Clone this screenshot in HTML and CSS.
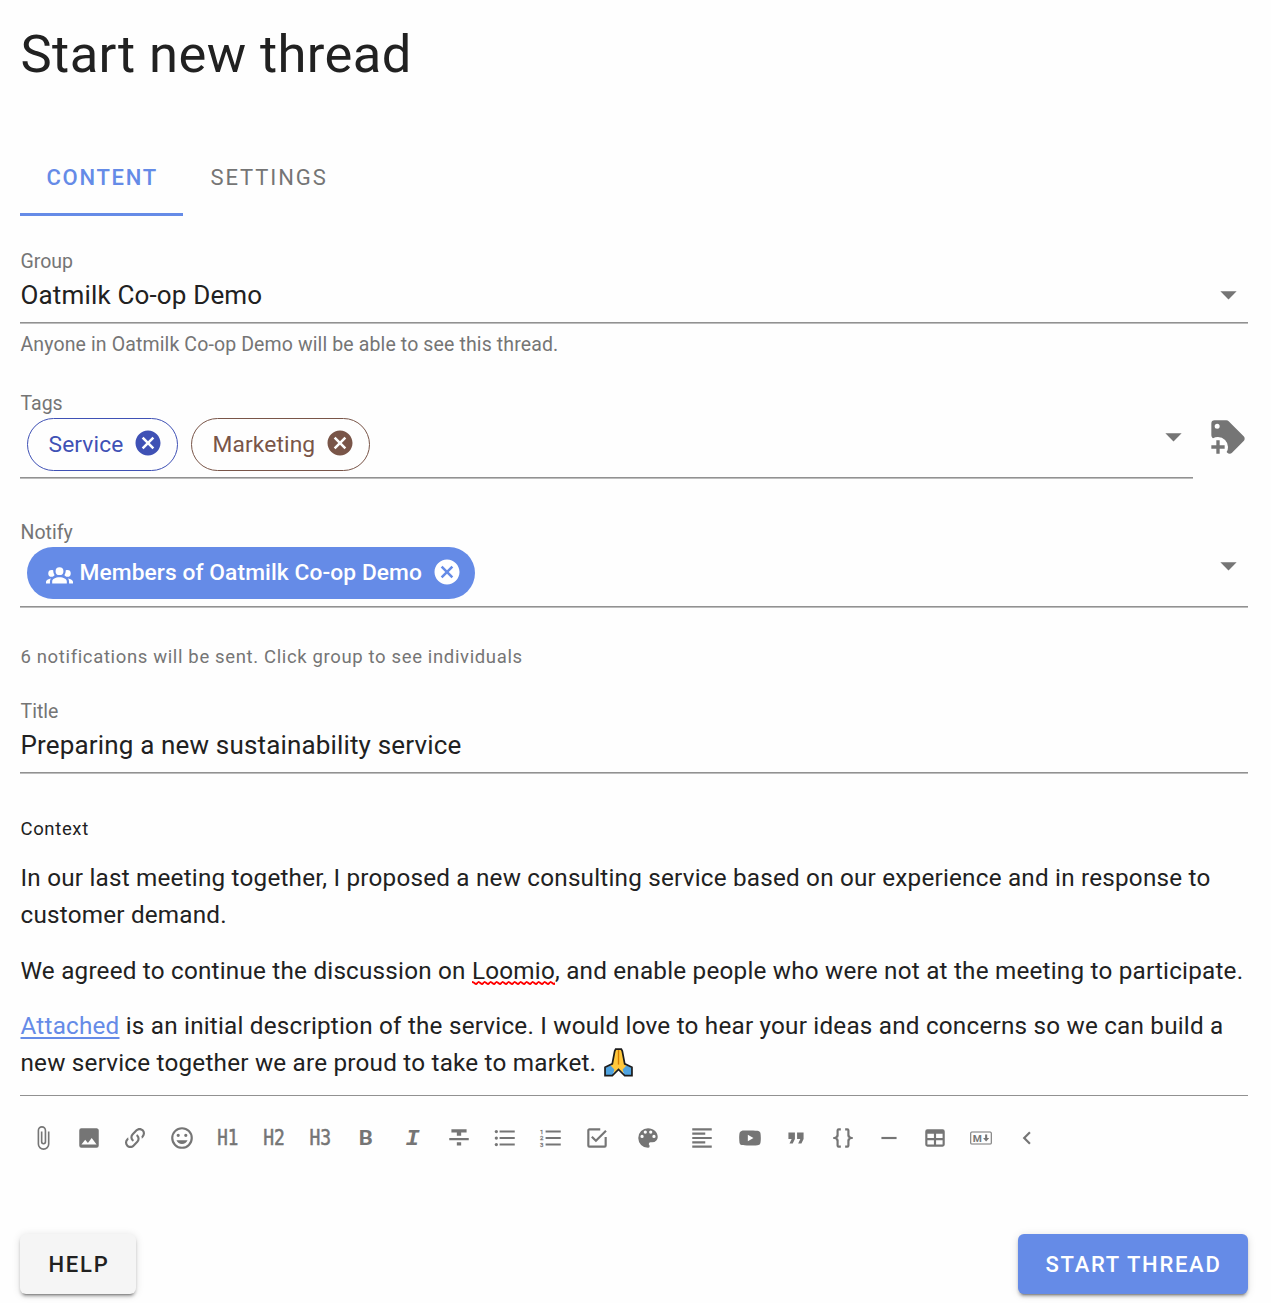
FILE: index.html
```
<!DOCTYPE html>
<html lang="en">
<head>
<meta charset="utf-8">
<title>Start new thread</title>
<link rel="stylesheet" href="styles.css">
</head>
<body>
<svg class="defs" aria-hidden="true">
  <symbol id="cancel" viewBox="0 0 24 24"><path d="M12,2C17.53,2 22,6.47 22,12C22,17.53 17.53,22 12,22C6.47,22 2,17.53 2,12C2,6.47 6.47,2 12,2M15.59,7L12,10.59L8.41,7L7,8.41L10.59,12L7,15.59L8.41,17L12,13.41L15.59,17L17,15.59L13.41,12L17,8.41L15.59,7Z"/></symbol>
  <symbol id="caret" viewBox="0 0 24 24"><path d="M7,10L12,15L17,10H7Z"/></symbol>
</svg>
<main class="form">
  <h1 class="headline">Start new thread</h1>

  <nav class="tabs">
    <a class="tab tab-active">CONTENT</a>
    <a class="tab">SETTINGS</a>
  </nav>

  <section class="field group-field">
    <label class="label">Group</label>
    <div class="control">
      <span class="value">Oatmilk Co-op Demo</span>
      <svg class="caret"><use href="#caret"/></svg>
    </div>
  </section>
  <p class="hint">Anyone in Oatmilk Co-op Demo will be able to see this thread.</p>

  <div class="tags-row">
    <section class="field tags-field">
      <label class="label">Tags</label>
      <div class="control chips">
        <span class="chip chip-service">Service<svg class="chip-close"><use href="#cancel"/></svg></span>
        <span class="chip chip-marketing">Marketing<svg class="chip-close"><use href="#cancel"/></svg></span>
        <svg class="caret"><use href="#caret"/></svg>
      </div>
    </section>
    <svg class="tag-plus" viewBox="0 0 24 24"><path d="M21.41 11.58L12.41 2.58A2 2 0 0 0 11 2H4A2 2 0 0 0 2 4V11A2 2 0 0 0 2.59 12.42L3 12.82A5.62 5.62 0 0 1 6 12A6 6 0 0 1 12 18A5.62 5.62 0 0 1 11.18 21L11.58 21.4A2 2 0 0 0 13 22A2 2 0 0 0 14.41 21.41L21.41 14.41A2 2 0 0 0 22 13A2 2 0 0 0 21.41 11.58M5.5 7A1.5 1.5 0 1 1 7 5.5A1.5 1.5 0 0 1 5.5 7M10 19H7V22H5V19H2V17H5V14H7V17H10Z"/></svg>
  </div>

  <section class="field notify-field">
    <label class="label">Notify</label>
    <div class="control chips">
      <span class="chip chip-members"><svg class="members-icon" viewBox="0 0 24 24"><path d="M12,5.5A3.5,3.5 0 0,1 15.5,9A3.5,3.5 0 0,1 12,12.5A3.5,3.5 0 0,1 8.5,9A3.5,3.5 0 0,1 12,5.5M5,8C5.56,8 6.08,8.15 6.53,8.42C6.38,9.85 6.8,11.27 7.66,12.38C7.16,13.34 6.16,14 5,14A3,3 0 0,1 2,11A3,3 0 0,1 5,8M19,8A3,3 0 0,1 22,11A3,3 0 0,1 19,14C17.84,14 16.84,13.34 16.34,12.38C17.2,11.27 17.62,9.85 17.47,8.42C17.92,8.15 18.44,8 19,8M5.5,18.25C5.5,16.18 8.41,14.5 12,14.5C15.59,14.5 18.5,16.18 18.5,18.25V20H5.5V18.25M0,20V18.5C0,17.11 1.89,15.94 4.45,15.6C3.86,16.28 3.5,17.22 3.5,18.25V20H0M24,20H20.5V18.25C20.5,17.22 20.14,16.28 19.55,15.6C22.11,15.94 24,17.11 24,18.5V20Z"/></svg>Members of Oatmilk Co-op Demo<svg class="chip-close"><use href="#cancel"/></svg></span>
      <svg class="caret"><use href="#caret"/></svg>
    </div>
  </section>
  <p class="caption notify-count">6 notifications will be sent. Click group to see individuals</p>

  <section class="field title-field">
    <label class="label">Title</label>
    <div class="control"><span class="value">Preparing a new sustainability service</span></div>
  </section>

  <p class="caption context-label">Context</p>
  <article class="editor">
    <p>In our last meeting together, I proposed a new consulting service based on our experience and in response to customer demand.</p>
    <p>We agreed to continue the discussion on <span class="misspelt">Loomio</span>, and enable people who were not at the meeting to participate.</p>
    <p><a class="link">Attached</a> is an initial description of the service. I would love to hear your ideas and concerns so we can build a new service together we are proud to take to market. <svg class="emoji" viewBox="0 0 84 84" role="img" aria-label="Folded hands"><path class="hands" d="M34 3H50L53 9L60 44L66 54L56 72L42 61L28 72L18 54L24 44L31 9Z"/><path class="cuff" d="M3 57L19 51L30 62L25 80H3Z"/><path class="cuff" d="M81 57L65 51L54 62L59 80H81Z"/><path class="crease" d="M42 6V48"/><path class="outline" d="M34 3H50L53 9L60 46L81 56V80H60L42 62L24 80H3V56L24 46L31 9Z"/></svg></p>
  </article>

  <div class="toolbar">
    <span class="tool"><svg viewBox="0 0 24 24"><path d="M16.5,6V17.5A4,4 0 0,1 12.5,21.5A4,4 0 0,1 8.5,17.5V5A2.5,2.5 0 0,1 11,2.5A2.5,2.5 0 0,1 13.5,5V15.5A1,1 0 0,1 12.5,16.5A1,1 0 0,1 11.5,15.5V6H10V15.5A2.5,2.5 0 0,0 12.5,18A2.5,2.5 0 0,0 15,15.5V5A4,4 0 0,0 11,1A4,4 0 0,0 7,5V17.5A5.5,5.5 0 0,0 12.5,23A5.5,5.5 0 0,0 18,17.5V6H16.5Z"/></svg></span>
    <span class="tool"><svg viewBox="0 0 24 24"><path d="M8.5,13.5L11,16.5L14.5,12L19,18H5M21,19V5C21,3.89 20.1,3 19,3H5A2,2 0 0,0 3,5V19A2,2 0 0,0 5,21H19A2,2 0 0,0 21,19Z"/></svg></span>
    <span class="tool"><svg viewBox="0 0 24 24"><path d="M10.59,13.41C11,13.8 11,14.44 10.59,14.83C10.2,15.22 9.56,15.22 9.17,14.83C7.22,12.88 7.22,9.71 9.17,7.76V7.76L12.71,4.22C14.66,2.27 17.83,2.27 19.78,4.22C21.73,6.17 21.73,9.34 19.78,11.29L18.29,12.78C18.3,11.96 18.17,11.14 17.89,10.36L18.36,9.88C19.54,8.71 19.54,6.81 18.36,5.64C17.19,4.46 15.29,4.46 14.12,5.64L10.59,9.17C9.41,10.34 9.41,12.24 10.59,13.41M13.41,9.17C13.8,8.78 14.44,8.78 14.83,9.17C16.78,11.12 16.78,14.29 14.83,16.24V16.24L11.29,19.78C9.34,21.73 6.17,21.73 4.22,19.78C2.27,17.83 2.27,14.66 4.22,12.71L5.71,11.22C5.7,12.04 5.83,12.86 6.11,13.65L5.64,14.12C4.46,15.29 4.46,17.19 5.64,18.36C6.81,19.54 8.71,19.54 9.88,18.36L13.41,14.83C14.59,13.66 14.59,11.76 13.41,10.59C13,10.2 13,9.56 13.41,9.17Z"/></svg></span>
    <span class="tool"><svg viewBox="0 0 24 24"><path d="M12,17.5C14.33,17.5 16.3,16.04 17.11,14H6.89C7.69,16.04 9.67,17.5 12,17.5M8.5,11A1.5,1.5 0 0,0 10,9.5A1.5,1.5 0 0,0 8.5,8A1.5,1.5 0 0,0 7,9.5A1.5,1.5 0 0,0 8.5,11M15.5,11A1.5,1.5 0 0,0 17,9.5A1.5,1.5 0 0,0 15.5,8A1.5,1.5 0 0,0 14,9.5A1.5,1.5 0 0,0 15.5,11M12,20A8,8 0 0,1 4,12A8,8 0 0,1 12,4A8,8 0 0,1 20,12A8,8 0 0,1 12,20M12,2C6.47,2 2,6.5 2,12A10,10 0 0,0 12,22A10,10 0 0,0 22,12A10,10 0 0,0 12,2Z"/></svg></span>
    <span class="tool"><svg viewBox="0 0 24 24"><text class="heading-glyph" x="2" y="18.2" textLength="19.5" lengthAdjust="spacingAndGlyphs">H1</text></svg></span>
    <span class="tool"><svg viewBox="0 0 24 24"><text class="heading-glyph" x="2" y="18.2" textLength="20" lengthAdjust="spacingAndGlyphs">H2</text></svg></span>
    <span class="tool"><svg viewBox="0 0 24 24"><text class="heading-glyph" x="2.3" y="18.2" textLength="20" lengthAdjust="spacingAndGlyphs">H3</text></svg></span>
    <span class="tool"><svg viewBox="0 0 24 24"><text class="bold-glyph" x="5.3" y="18.2" textLength="13" lengthAdjust="spacingAndGlyphs">B</text></svg></span>
    <span class="tool"><svg viewBox="0 0 24 24"><text class="italic-glyph" x="5" y="18.2" textLength="13" lengthAdjust="spacingAndGlyphs">I</text></svg></span>
    <span class="tool"><svg viewBox="0 0 24 24"><path d="M3,14H21V12H3M5,4V7H10V10H14V7H19V4M10,19H14V16H10V19Z"/></svg></span>
    <span class="tool"><svg viewBox="0 0 24 24"><path d="M7,5H21V7H7V5M7,13V11H21V13H7M7,19V17H21V19H7"/><circle cx="4" cy="6" r="1.5"/><circle cx="4" cy="12" r="1.5"/><circle cx="4" cy="18" r="1.5"/></svg></span>
    <span class="tool"><svg viewBox="0 0 24 24"><path d="M7,5H21V7H7V5M7,13V11H21V13H7M7,19V17H21V19H7"/><text class="list-digit" x="1.8" y="7.9">1</text><text class="list-digit" x="1.8" y="14">2</text><text class="list-digit" x="1.8" y="20.2">3</text></svg></span>
    <span class="tool"><svg viewBox="0 0 24 24"><path d="M19,19H5V5H15V3H5C3.89,3 3,3.89 3,5V19A2,2 0 0,0 5,21H19A2,2 0 0,0 21,19V11H19M7.91,10.08L6.5,11.5L11,16L21,6L19.59,4.58L11,13.17L7.91,10.08Z"/></svg></span>
    <span class="tool tool-colour"><svg viewBox="0 0 24 24"><path d="M17.5,12A1.5,1.5 0 0,1 16,10.5A1.5,1.5 0 0,1 17.5,9A1.5,1.5 0 0,1 19,10.5A1.5,1.5 0 0,1 17.5,12M14.5,8A1.5,1.5 0 0,1 13,6.5A1.5,1.5 0 0,1 14.5,5A1.5,1.5 0 0,1 16,6.5A1.5,1.5 0 0,1 14.5,8M9.5,8A1.5,1.5 0 0,1 8,6.5A1.5,1.5 0 0,1 9.5,5A1.5,1.5 0 0,1 11,6.5A1.5,1.5 0 0,1 9.5,8M6.5,12A1.5,1.5 0 0,1 5,10.5A1.5,1.5 0 0,1 6.5,9A1.5,1.5 0 0,1 8,10.5A1.5,1.5 0 0,1 6.5,12M12,3A9,9 0 0,0 3,12A9,9 0 0,0 12,21A1.5,1.5 0 0,0 13.5,19.5C13.5,19.11 13.35,18.76 13.11,18.5C12.88,18.23 12.73,17.88 12.73,17.5A1.5,1.5 0 0,1 14.23,16H16A5,5 0 0,0 21,11C21,6.58 16.97,3 12,3Z"/></svg></span>
    <span class="tool tool-align"><svg viewBox="0 0 24 24"><path d="M3,3H21V5H3V3M3,7H15V9H3V7M3,11H21V13H3V11M3,15H15V17H3V15M3,19H21V21H3V19Z"/></svg></span>
    <span class="tool"><svg viewBox="0 0 24 24"><path d="M10,15L15.19,12L10,9V15M21.56,7.17C21.69,7.64 21.78,8.27 21.84,9.07C21.91,9.87 21.94,10.56 21.94,11.16L22,12C22,14.19 21.84,15.8 21.56,16.83C21.31,17.73 20.73,18.31 19.83,18.56C19.36,18.69 18.5,18.78 17.18,18.84C15.88,18.91 14.69,18.94 13.59,18.94L12,19C7.81,19 5.2,18.84 4.17,18.56C3.27,18.31 2.69,17.73 2.44,16.83C2.31,16.36 2.22,15.73 2.16,14.93C2.09,14.13 2.06,13.44 2.06,12.84L2,12C2,9.81 2.16,8.2 2.44,7.17C2.69,6.27 3.27,5.69 4.17,5.44C4.64,5.31 5.5,5.22 6.82,5.16C8.12,5.09 9.31,5.06 10.41,5.06L12,5C16.19,5 18.8,5.16 19.83,5.44C20.73,5.69 21.31,6.27 21.56,7.17Z"/></svg></span>
    <span class="tool"><svg viewBox="0 0 24 24"><path d="M14,17H17L19,13V7H13V13H16M6,17H9L11,13V7H5V13H8L6,17Z"/></svg></span>
    <span class="tool"><svg viewBox="0 0 24 24"><path d="M8,3A2,2 0 0,0 6,5V9A2,2 0 0,1 4,11H3V13H4A2,2 0 0,1 6,15V19A2,2 0 0,0 8,21H10V19H8V14A2,2 0 0,0 6,12A2,2 0 0,0 8,10V5H10V3M16,3A2,2 0 0,1 18,5V9A2,2 0 0,0 20,11H21V13H20A2,2 0 0,0 18,15V19A2,2 0 0,1 16,21H14V19H16V14A2,2 0 0,1 18,12A2,2 0 0,1 16,10V5H14V3H16Z"/></svg></span>
    <span class="tool"><svg viewBox="0 0 24 24"><path d="M19,13H5V11H19V13Z"/></svg></span>
    <span class="tool"><svg viewBox="0 0 24 24"><path d="M5,4H19A2,2 0 0,1 21,6V18A2,2 0 0,1 19,20H5A2,2 0 0,1 3,18V6A2,2 0 0,1 5,4M5,8V12H11V8H5M13,8V12H19V8H13M5,14V18H11V14H5M13,14V18H19V14H13Z"/></svg></span>
    <span class="tool"><svg viewBox="0 0 24 24"><rect class="frame" x="2.5" y="6.5" width="19" height="11" rx="1"/><text class="md-glyph" x="4.4" y="15.3" textLength="8.4" lengthAdjust="spacingAndGlyphs">M</text><path d="M16.73 15.28L13.88 12.03H15.79V8.72H17.7V12.03H19.61Z"/></svg></span>
    <span class="tool"><svg viewBox="0 0 24 24"><path d="M15.41,16.58L10.83,12L15.41,7.41L14,6L8,12L14,18L15.41,16.58Z"/></svg></span>
  </div>

  <footer class="actions">
    <button class="btn btn-help">HELP</button>
    <button class="btn btn-primary">START THREAD</button>
  </footer>
</main>
</body>
</html>
```

FILE: styles.css
```
* { box-sizing: border-box; }

body {
  margin: 0;
  background: #fefefe;
  color: #212121;
  font-family: Roboto, "Liberation Sans", sans-serif;
}

p, h1 { margin: 0; }

svg { display: block; fill: currentColor; flex: none; }

.defs { display: none; }

.form {
  display: flex;
  flex-direction: column;
  min-height: 1303px;
  padding: 16px 23px 9px 20px;
}

.headline {
  padding-left: 0.5px;
  font-size: 52.5px;
  font-weight: 400;
  line-height: 76px;
  letter-spacing: 0.4px;
}

/* Tabs */
.tabs { display: flex; height: 78px; margin-top: 46px; }

.tab {
  display: flex;
  align-items: center;
  padding: 0 25px 0 26.5px;
  color: #757575;
  font-size: 22px;
  font-weight: 500;
  letter-spacing: 1.7px;
}

.tab:not(.tab-active) { font-weight: 400; padding-left: 27.5px; letter-spacing: 1.9px; }

.tab-active {
  width: 163px;
  color: #658be7;
  box-shadow: inset 0 -3px #658be7;
}

/* Fields */
.field {
  border-bottom: 1px solid #919191;
  box-shadow: 0 1px #bdbdbd;
}

.label {
  display: block;
  padding: 1px 0 0 0.5px;
  color: #757575;
  font-size: 19.5px;
  line-height: 26px;
}

.control {
  display: flex;
  align-items: center;
  justify-content: space-between;
  height: 47px;
  padding-bottom: 7px;
}

.value { padding-left: 0.5px; font-size: 26px; line-height: 40px; letter-spacing: 0.16px; }

.caret { width: 39px; height: 39px; margin-top: -1px; color: #757575; }

.group-field { margin-top: 32px; }

.hint {
  margin-top: 9px;
  padding-left: 0.5px;
  color: #757575;
  font-size: 19.5px;
  line-height: 26px;
  letter-spacing: 0.12px;
}

.tags-row { display: flex; justify-content: space-between; margin-top: 32px; }
.tags-field { width: 1173px; }
.tag-plus { width: 40px; height: 40px; margin-top: 27px; color: #757575; }

.chips {
  height: 60px;
  align-items: flex-start;
  justify-content: flex-start;
  gap: 13px;
  padding: 1px 0 0 7px;
}
.chips .caret { margin-left: auto; }

.chip {
  display: flex;
  align-items: center;
  height: 53px;
  border: 1.6px solid currentColor;
  border-radius: 27px;
  font-size: 22.75px;
  letter-spacing: 0.12px;
}

.chip-close { width: 30px; height: 30px; margin: -4px 0 0 auto; }

.chip-service { width: 151px; padding: 0 14px 0 20.5px; color: #3f51b5; }
.chip-marketing { width: 179px; padding: 0 14px 0 20.5px; color: #795548; }

.chip-members {
  width: 448px;
  height: 52px;
  padding: 0 13px 2px 19px;
  border: 0;
  background: #658be7;
  color: #fff;
  font-weight: 500;
  letter-spacing: 0.09px;
}
.chip-members .chip-close { margin-top: -1px; }
.members-icon { width: 27px; height: 27px; margin: 4px 6.5px 0 0; }

.notify-field { margin-top: 41px; }

.caption { padding-left: 0.5px; font-size: 18.5px; line-height: 26px; letter-spacing: 0.64px; }

.notify-count { margin-top: 37px; color: #757575; }

.title-field { margin-top: 28px; }

.context-label { margin-top: 43px; }

/* Rich text editor */
.editor {
  display: flex;
  flex-direction: column;
  gap: 18.5px;
  height: 236px;
  margin-top: 18px;
  padding-left: 0.5px;
  border-bottom: 1px solid #919191;
  font-size: 24.25px;
  line-height: 37px;
  letter-spacing: 0.214px;
}

.editor p { width: 1240px; }

.misspelt {
  background: url("data:image/svg+xml,%3Csvg xmlns='http://www.w3.org/2000/svg' width='6' height='4'%3E%3Cpath d='M0 1 Q1.5 1 3 2.5 T6 1' fill='none' stroke='red' stroke-width='1.8'/%3E%3C/svg%3E") 0 100% repeat-x;
}

.link {
  color: #658be7;
  text-decoration: underline;
  text-decoration-thickness: 2px;
  text-underline-offset: 3px;
}

.emoji { display: inline-block; width: 29px; height: 29px; margin-left: 1.5px; vertical-align: -6px; }
.hands { fill: #ffc83d; }
.cuff { fill: #4fa3e0; }
.crease { fill: none; stroke: #d67d00; stroke-width: 4; }
.outline { fill: none; stroke: #1b1b1b; stroke-width: 5; }

/* Formatting toolbar */
.toolbar { display: flex; margin-top: 19px; height: 46px; color: #757575; }

.tool {
  display: flex;
  align-items: center;
  justify-content: center;
  width: 46.2px;
}
.tool svg { width: 26px; height: 26px; }
.tool-colour { width: 55.7px; }
.tool-align { width: 51px; }

.heading-glyph { font: 19.2px "DejaVu Sans Mono", monospace; stroke: currentColor; stroke-width: 0.5; }
.bold-glyph { font: bold 19.4px Roboto, sans-serif; }
.italic-glyph { font: italic bold 21px "Liberation Mono", monospace; }
.list-digit { font: 5.6px Roboto, sans-serif; stroke: currentColor; stroke-width: 0.25; }
.md-glyph { font: bold 9px Roboto, sans-serif; }
.frame { fill: none; stroke: currentColor; stroke-width: 1; }

/* Buttons */
.actions { display: flex; justify-content: space-between; margin-top: 73px; }

.btn {
  height: 60px;
  padding: 0 0 0 1px;
  border: 0;
  border-radius: 6px;
  font: 500 22px Roboto, sans-serif;
  letter-spacing: 1.8px;
  box-shadow: 0 4px 2px -3px rgba(0, 0, 0, 0.35), 0 3px 3px rgba(0, 0, 0, 0.18), 0 1px 8px rgba(0, 0, 0, 0.12);
}

.btn-help { width: 116px; padding-left: 2px; background: #f5f5f5; color: #212121; }
.btn-primary { width: 230px; background: #658be7; color: #fff; letter-spacing: 1.7px; }
```
